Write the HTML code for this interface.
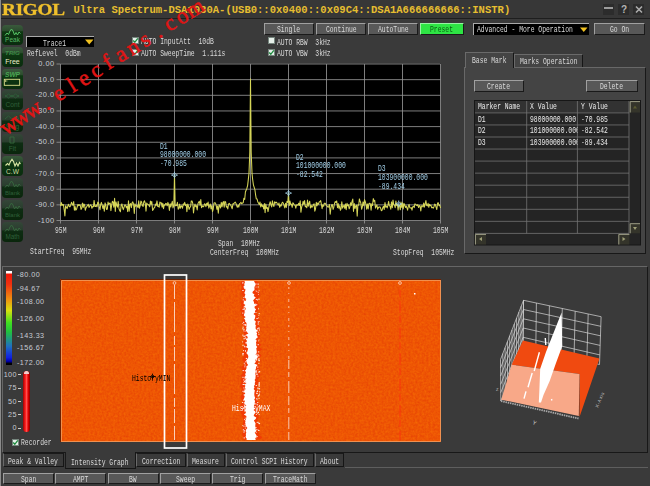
<!DOCTYPE html><html><head><meta charset="utf-8"><title>Ultra Spectrum</title><style>
*{margin:0;padding:0;box-sizing:border-box}
html,body{width:650px;height:486px;overflow:hidden;background:#3a3a3a}
body{position:relative;font-family:"Liberation Mono",monospace;font-size:6.4px;color:#dadada;line-height:8px}
.a{position:absolute;white-space:pre}
.t{position:absolute;white-space:pre;height:8px;line-height:8px;font-size:8.2px;transform:scaleX(0.78);transform-origin:0 50%}
.btn{position:absolute;background:#585858;border-top:1px solid #a0a0a0;border-left:1px solid #a0a0a0;border-right:1.5px solid #1a1a1a;border-bottom:1.5px solid #1a1a1a}
.sb{position:absolute;left:1.6px;width:21px;height:20px;border-radius:4px;overflow:hidden}
.ax{position:absolute;letter-spacing:0.45px;font-family:"Liberation Sans",sans-serif;font-size:7.4px;color:#c8ccd4;white-space:pre;line-height:8px;height:8px}
.cb{position:absolute;width:7px;height:7px;background:#e6efe9;border:1px solid #76867e}
.wm{width:30px;height:28px;line-height:28px;text-align:center;transform-origin:50% 16.4px;transform:rotate(-32deg);font-family:"Liberation Serif",serif;font-size:22.6px;color:#e01414;-webkit-text-stroke:0.5px #e01414}
.tab{position:absolute;background:#444444;border:1px solid #161616;border-top-color:#6a6a6a;border-left-color:#6a6a6a}
</style></head><body>
<div class="a" style="left:0;top:0;width:650px;height:19px;background:#373737;border-bottom:1.5px solid #1e1e1e"></div>
<div class="a" style="left:0;top:0;width:1.3px;height:486px;background:#8c8c8c"></div>
<div class="a" style="left:2.3px;top:0px;height:18px;line-height:19.5px;font-family:'Liberation Serif',serif;font-weight:bold;font-size:16px;color:#f0c02c;-webkit-text-stroke:0.35px #f0c02c;letter-spacing:-0.2px;transform-origin:0 0;transform:scaleX(1.2)">RIGOL</div>
<div class="a" style="left:73.5px;top:3.5px;height:12px;line-height:12px;font-family:'Liberation Mono',monospace;font-weight:bold;font-size:10.55px;color:#e6be30">Ultra Spectrum-DSA1030A-(USB0::0x0400::0x09C4::DSA1A666666666::INSTR)</div>
<div class="a" style="left:603px;top:4px;width:11px;height:11px;background:#2c2c2c"></div>
<div class="a" style="left:618px;top:4px;width:11px;height:11px;background:#2c2c2c"></div>
<div class="a" style="left:633px;top:4px;width:11px;height:11px;background:#2c2c2c"></div>
<div class="a" style="left:604px;top:7px;width:9px;height:2.4px;background:#9c9c9c"></div>
<div class="a" style="left:618px;top:4px;width:12px;height:11px;line-height:11px;text-align:center;font-family:'Liberation Sans',sans-serif;font-weight:bold;font-size:10px;color:#b4b4b4">?</div>
<svg class="a" style="left:633px;top:4px" width="12" height="11"><path d="M3 2.5 L9 8.5 M9 2.5 L3 8.5" stroke="#acacac" stroke-width="1.6"/></svg>
<div class="btn" style="left:264px;top:23px;width:50px;height:12px;"></div>
<div class="t" style="left:277.48px;top:26.30px;">Single</div>
<div class="btn" style="left:316px;top:23px;width:50px;height:12px;"></div>
<div class="t" style="left:325.64px;top:26.30px;">Continue</div>
<div class="btn" style="left:368px;top:23px;width:50px;height:12px;"></div>
<div class="t" style="left:377.64px;top:26.30px;">AutoTune</div>
<div class="btn" style="left:420px;top:23px;width:44px;height:12px;background:#2ee444;border-top-color:#9af0a4;border-left-color:#9af0a4"></div>
<div class="t" style="left:430.48px;top:26.30px;color:#0a5a14;">Preset</div>
<div class="a" style="left:473px;top:23px;width:116px;height:12px;background:#000;border-top:1px solid #aaa;border-left:1px solid #aaa"></div>
<div class="t" style="left:477px;top:26.10px;">Advanced - More Operation</div>
<svg class="a" style="left:579.5px;top:26.5px" width="8" height="6"><path d="M0 0.5 L7.5 0.5 L3.75 5 Z" fill="#f0c020"/></svg>
<div class="btn" style="left:594px;top:23px;width:51px;height:12px;"></div>
<div class="t" style="left:609.9px;top:26.30px;">Go On</div>
<div class="sb" style="top:24.8px;background:linear-gradient(#3a5a3c 0%,#2c4c2e 28%,#0e3812 34%,#0a2c0e 100%)"><svg width="21" height="20" viewBox="0 0 21 20" style="position:absolute;left:0;top:0"><path d="M1.5 8 L3.5 5.5 L5 7 L6.5 3.5 L8 1.5 L9.5 3.5 L11 7.5 L12.5 5 L14 7.5 L15.5 4.5 L17 6" transform="translate(1.5,2.5)" fill="none" stroke="#58c468" stroke-width="1"/><text x="10.5" y="17" text-anchor="middle" font-family="Liberation Sans,sans-serif" font-size="6.5" fill="#58b866" >Peak</text></svg></div>
<div class="sb" style="top:46.7px;background:linear-gradient(#3a5a3c 0%,#2c4c2e 28%,#0e3812 34%,#0a2c0e 100%)"><svg width="21" height="20" viewBox="0 0 21 20" style="position:absolute;left:0;top:0"><text x="10.5" y="8" text-anchor="middle" font-family="Liberation Sans,sans-serif" font-size="6.2" fill="#3f8a48" font-weight="bold" font-style="italic">TRIG</text><text x="10.5" y="17" text-anchor="middle" font-family="Liberation Sans,sans-serif" font-size="7" fill="#ecebc8" >Free</text></svg></div>
<div class="sb" style="top:68.5px;background:linear-gradient(#3a5a3c 0%,#2c4c2e 28%,#0e3812 34%,#0a2c0e 100%)"><svg width="21" height="20" viewBox="0 0 21 20" style="position:absolute;left:0;top:0"><text x="10.5" y="8" text-anchor="middle" font-family="Liberation Sans,sans-serif" font-size="6.6" fill="#49a652" font-weight="bold" font-style="italic">SWP</text><rect x="2.3" y="10.3" width="15.4" height="6" fill="none" stroke="#e0e08c" stroke-width="0.9"/><path d="M3 12 l2.4 0 M3 12 l1 -1 M3 12 l1 1" stroke="#e0e08c" stroke-width="0.6" fill="none"/></svg></div>
<div class="sb" style="top:90.4px;background:linear-gradient(#344638 0%,#2a3e2e 38%,#0e2c12 46%,#0a260c 100%)"><svg width="21" height="20" viewBox="0 0 21 20" style="position:absolute;left:0;top:0"><path d="M3 7 l3.5 -3 l3.5 3 l3.5 -3 l3.5 3 M3 5 l3.5 3 l3.5 -3 l3.5 3 l3.5 -3" fill="none" stroke="#30603a" stroke-width="0.9"/><text x="10.5" y="17" text-anchor="middle" font-family="Liberation Sans,sans-serif" font-size="6.6" fill="#30603a" >Cont</text></svg></div>
<div class="sb" style="top:112.3px;background:linear-gradient(#344638 0%,#2a3e2e 38%,#0e2c12 46%,#0a260c 100%)"><svg width="21" height="20" viewBox="0 0 21 20" style="position:absolute;left:0;top:0"><path d="M3 7 l3.5 -3 l3.5 3 l3.5 -3 l3.5 3" fill="none" stroke="#30603a" stroke-width="0.9"/><text x="10.5" y="17" text-anchor="middle" font-family="Liberation Sans,sans-serif" font-size="6.6" fill="#30603a" >Sing</text></svg></div>
<div class="sb" style="top:134.2px;background:linear-gradient(#344638 0%,#2a3e2e 38%,#0e2c12 46%,#0a260c 100%)"><svg width="21" height="20" viewBox="0 0 21 20" style="position:absolute;left:0;top:0"><path d="M8 3 h4 v6 h-4 z" fill="none" stroke="#386a40" stroke-width="0.9"/><text x="10.5" y="17" text-anchor="middle" font-family="Liberation Sans,sans-serif" font-size="6.6" fill="#30603a" >Fit</text></svg></div>
<div class="sb" style="top:156.0px;background:linear-gradient(#3a5a3c 0%,#2c4c2e 28%,#0e3812 34%,#0a2c0e 100%)"><svg width="21" height="20" viewBox="0 0 21 20" style="position:absolute;left:0;top:0"><path d="M2 7 L4 5 L5.5 6.5 L7 3 L8.5 0.8 L10 3 L11.5 7.5 L13 4.5 L14.5 7.5 L16 4 L17 5.5" transform="translate(1.5,2.5)" fill="none" stroke="#d8e4a4" stroke-width="1.1"/><text x="10.5" y="17.5" text-anchor="middle" font-family="Liberation Sans,sans-serif" font-size="6.6" fill="#cfdca0" >C.W</text></svg></div>
<div class="sb" style="top:177.9px;background:linear-gradient(#344638 0%,#2a3e2e 38%,#0e2c12 46%,#0a260c 100%)"><svg width="21" height="20" viewBox="0 0 21 20" style="position:absolute;left:0;top:0"><path d="M1.5 8 L3.5 5.5 L5 7 L6.5 3.5 L8 1.5 L9.5 3.5 L11 7.5 L12.5 5 L14 7.5 L15.5 4.5 L17 6" transform="translate(1.5,1.5)" fill="none" stroke="#386a40" stroke-width="0.9"/><text x="10.5" y="17" text-anchor="middle" font-family="Liberation Sans,sans-serif" font-size="6" fill="#30603a" >Blank</text></svg></div>
<div class="sb" style="top:199.8px;background:linear-gradient(#344638 0%,#2a3e2e 38%,#0e2c12 46%,#0a260c 100%)"><svg width="21" height="20" viewBox="0 0 21 20" style="position:absolute;left:0;top:0"><path d="M1.5 8 L3.5 5.5 L5 7 L6.5 3.5 L8 1.5 L9.5 3.5 L11 7.5 L12.5 5 L14 7.5 L15.5 4.5 L17 6" transform="translate(1.5,1.5)" fill="none" stroke="#386a40" stroke-width="0.9"/><text x="10.5" y="17" text-anchor="middle" font-family="Liberation Sans,sans-serif" font-size="6" fill="#30603a" >Blank</text></svg></div>
<div class="sb" style="top:221.6px;background:linear-gradient(#344638 0%,#2a3e2e 38%,#0e2c12 46%,#0a260c 100%)"><svg width="21" height="20" viewBox="0 0 21 20" style="position:absolute;left:0;top:0"><path d="M1.5 8 L3.5 5.5 L5 7 L6.5 3.5 L8 1.5 L9.5 3.5 L11 7.5 L12.5 5 L14 7.5 L15.5 4.5 L17 6" transform="translate(1.5,1.5)" fill="none" stroke="#386a40" stroke-width="0.9"/><text x="10.5" y="17" text-anchor="middle" font-family="Liberation Sans,sans-serif" font-size="6.4" fill="#30603a" >Math</text></svg></div>
<div class="a" style="left:26px;top:36px;width:67.5px;height:10.8px;background:#000;border-top:1px solid #aaa;border-left:1px solid #aaa"></div>
<div class="t" style="left:43.48px;top:39.70px;">Trace1</div>
<svg class="a" style="left:84.6px;top:39.3px" width="9" height="6"><path d="M0 0.5 L8.5 0.5 L4.25 5.5 Z" fill="#f0c020"/></svg>
<div class="t" style="left:26.5px;top:49.70px;">RefLevel  0dBm</div>
<div class="cb" style="left:132px;top:37px"></div>
<svg class="a" style="left:132px;top:37px" width="7" height="7"><path d="M1.2 3.5 L2.8 5.3 L5.8 1.4" fill="none" stroke="#1c8a3c" stroke-width="1.3"/></svg>
<div class="cb" style="left:132px;top:48.5px"></div>
<svg class="a" style="left:132px;top:48.5px" width="7" height="7"><path d="M1.2 3.5 L2.8 5.3 L5.8 1.4" fill="none" stroke="#1c8a3c" stroke-width="1.3"/></svg>
<div class="cb" style="left:268px;top:37px"></div>
<div class="cb" style="left:268px;top:48.5px"></div>
<svg class="a" style="left:268px;top:48.5px" width="7" height="7"><path d="M1.2 3.5 L2.8 5.3 L5.8 1.4" fill="none" stroke="#1c8a3c" stroke-width="1.3"/></svg>
<div class="t" style="left:141px;top:38.20px;">AUTO InputAtt  10dB</div>
<div class="t" style="left:141px;top:49.80px;">AUTO SweepTime  1.111s</div>
<div class="t" style="left:277px;top:38.50px;">AUTO RBW  3kHz</div>
<div class="t" style="left:277px;top:50.00px;">AUTO VBW  3kHz</div>
<svg class="a" style="left:0;top:0" width="650" height="260" viewBox="0 0 650 260"><rect x="60" y="63.5" width="381" height="157.5" fill="#000"/><path d="M60.50 64.00 V223.50 M56.50 64.00 H440.50 M98.50 64.00 V223.50 M56.50 79.65 H440.50 M136.50 64.00 V223.50 M56.50 95.30 H440.50 M174.50 64.00 V223.50 M56.50 110.95 H440.50 M212.50 64.00 V223.50 M56.50 126.60 H440.50 M250.50 64.00 V223.50 M56.50 142.25 H440.50 M288.50 64.00 V223.50 M56.50 157.90 H440.50 M326.50 64.00 V223.50 M56.50 173.55 H440.50 M364.50 64.00 V223.50 M56.50 189.20 H440.50 M402.50 64.00 V223.50 M56.50 204.85 H440.50 M440.50 64.00 V223.50 M56.50 220.50 H440.50" stroke="#949494" stroke-width="0.85" fill="none"/><polyline points="60.5,206.0 61.2,202.4 62.0,205.6 62.7,204.3 63.4,204.7 64.2,209.8 64.9,216.0 65.6,205.7 66.3,207.1 67.1,208.6 67.8,206.2 68.5,204.2 69.3,206.7 70.0,206.8 70.7,205.2 71.5,202.3 72.2,204.0 72.9,205.3 73.7,201.5 74.4,210.2 75.1,206.5 75.8,210.2 76.6,209.2 77.3,206.5 78.0,204.4 78.8,205.6 79.5,204.7 80.2,205.2 81.0,209.5 81.7,208.5 82.4,203.1 83.2,207.5 83.9,203.9 84.6,205.1 85.3,210.3 86.1,207.7 86.8,206.5 87.5,205.7 88.3,204.3 89.0,207.4 89.7,206.0 90.5,204.9 91.2,205.3 91.9,208.3 92.7,206.5 93.4,206.8 94.1,200.4 94.8,206.4 95.6,206.5 96.3,205.0 97.0,206.8 97.8,202.1 98.5,202.6 99.2,206.4 100.0,209.8 100.7,204.5 101.4,202.4 102.2,205.4 102.9,208.4 103.6,205.6 104.3,211.2 105.1,202.9 105.8,205.1 106.5,209.4 107.3,209.2 108.0,202.0 108.7,204.4 109.5,203.3 110.2,203.1 110.9,210.6 111.7,204.7 112.4,201.3 113.1,201.9 113.8,207.3 114.6,198.3 115.3,211.4 116.0,201.9 116.8,205.3 117.5,207.1 118.2,201.4 119.0,208.7 119.7,210.5 120.4,211.8 121.2,205.2 121.9,203.9 122.6,207.5 123.3,209.7 124.1,207.2 124.8,204.9 125.5,205.0 126.3,207.7 127.0,206.3 127.7,211.6 128.5,200.8 129.2,211.3 129.9,204.4 130.7,203.5 131.4,207.6 132.1,202.9 132.8,201.9 133.6,204.1 134.3,213.4 135.0,203.8 135.8,206.3 136.5,205.4 137.2,205.8 138.0,207.6 138.7,200.7 139.4,208.3 140.2,205.5 140.9,201.1 141.6,201.8 142.3,205.7 143.1,206.4 143.8,201.8 144.5,200.8 145.3,203.4 146.0,211.1 146.7,203.1 147.5,204.1 148.2,204.6 148.9,205.2 149.7,206.8 150.4,201.0 151.1,204.2 151.8,201.5 152.6,210.4 153.3,209.4 154.0,208.1 154.8,207.1 155.5,204.0 156.2,205.4 157.0,200.9 157.7,206.4 158.4,206.1 159.2,207.3 159.9,202.0 160.6,203.1 161.3,202.7 162.1,207.1 162.8,203.2 163.5,208.7 164.3,204.9 165.0,205.3 165.7,203.4 166.5,203.8 167.2,205.8 167.9,202.4 168.7,204.8 169.4,210.4 170.1,203.7 170.8,207.0 171.6,203.9 172.3,201.3 173.0,207.9 173.8,205.5 174.5,175.1 175.2,205.9 176.0,205.3 176.7,205.6 177.4,202.3 178.2,209.3 178.9,208.2 179.6,204.1 180.3,208.3 181.1,205.8 181.8,206.3 182.5,208.2 183.3,203.9 184.0,204.9 184.7,202.3 185.5,205.5 186.2,204.5 186.9,211.8 187.7,204.0 188.4,205.9 189.1,209.4 189.8,207.5 190.6,206.6 191.3,200.9 192.0,200.9 192.8,203.5 193.5,212.9 194.2,207.1 195.0,204.1 195.7,206.7 196.4,205.6 197.2,210.0 197.9,203.9 198.6,202.2 199.3,201.2 200.1,205.3 200.8,199.5 201.5,207.7 202.3,205.8 203.0,206.6 203.7,206.6 204.5,203.8 205.2,204.2 205.9,206.7 206.7,203.3 207.4,205.2 208.1,202.0 208.8,208.1 209.6,205.8 210.3,204.0 211.0,209.0 211.8,205.6 212.5,211.5 213.2,209.3 214.0,202.9 214.7,202.7 215.4,202.9 216.2,205.3 216.9,209.3 217.6,206.0 218.3,213.2 219.1,204.7 219.8,205.8 220.5,208.0 221.3,202.4 222.0,206.8 222.7,203.1 223.5,201.6 224.2,207.2 224.9,201.3 225.7,202.2 226.4,207.1 227.1,206.5 227.8,208.9 228.6,204.0 229.3,203.4 230.0,204.5 230.8,205.2 231.5,207.0 232.2,208.7 233.0,203.7 233.7,203.9 234.4,202.8 235.2,202.1 235.9,203.2 236.6,205.4 237.3,207.2 238.1,205.2 238.8,207.1 239.5,203.6 240.3,203.2 241.0,202.4 241.7,203.8 242.5,202.9 243.2,202.8 243.9,198.2 244.7,199.4 245.4,192.0 246.1,190.3 246.8,188.7 247.6,185.6 248.3,179.6 249.0,173.3 249.8,152.0 250.5,78.9 251.2,152.3 252.0,173.0 252.7,179.7 253.4,184.8 254.2,187.4 254.9,189.7 255.6,194.8 256.3,198.8 257.1,199.1 257.8,201.9 258.5,203.0 259.3,204.6 260.0,202.0 260.7,207.0 261.5,203.8 262.2,206.4 262.9,205.5 263.7,208.9 264.4,203.5 265.1,212.8 265.8,204.1 266.6,208.4 267.3,207.5 268.0,211.6 268.8,207.4 269.5,204.2 270.2,201.7 271.0,204.9 271.7,206.9 272.4,200.8 273.2,204.8 273.9,206.5 274.6,201.8 275.3,203.1 276.1,202.1 276.8,202.7 277.5,204.0 278.3,205.0 279.0,203.0 279.7,207.3 280.5,205.0 281.2,205.9 281.9,203.0 282.7,202.2 283.4,203.4 284.1,205.7 284.8,207.9 285.6,203.3 286.3,207.4 287.0,201.4 287.8,202.4 288.5,193.1 289.2,205.6 290.0,201.0 290.7,204.4 291.4,204.1 292.2,207.3 292.9,202.7 293.6,203.6 294.3,205.1 295.1,205.2 295.8,208.2 296.5,205.1 297.3,204.8 298.0,205.4 298.7,203.2 299.5,205.4 300.2,200.8 300.9,212.3 301.7,206.9 302.4,205.0 303.1,201.3 303.8,204.3 304.6,200.6 305.3,206.7 306.0,206.2 306.8,207.7 307.5,200.0 308.2,206.3 309.0,203.2 309.7,201.2 310.4,208.0 311.2,205.5 311.9,207.3 312.6,206.5 313.3,204.7 314.1,203.8 314.8,211.2 315.5,209.0 316.3,202.3 317.0,205.8 317.7,203.1 318.5,204.3 319.2,201.8 319.9,201.8 320.7,200.6 321.4,204.4 322.1,208.7 322.8,204.9 323.6,206.3 324.3,203.2 325.0,203.2 325.8,204.2 326.5,205.7 327.2,205.9 328.0,207.3 328.7,206.8 329.4,204.5 330.2,214.3 330.9,208.3 331.6,204.8 332.3,204.6 333.1,209.4 333.8,207.4 334.5,203.5 335.3,201.5 336.0,202.5 336.7,200.9 337.5,207.7 338.2,203.6 338.9,208.3 339.7,205.7 340.4,210.3 341.1,208.7 341.8,201.7 342.6,208.1 343.3,206.4 344.0,205.2 344.8,208.4 345.5,203.9 346.2,209.8 347.0,203.2 347.7,205.8 348.4,204.9 349.2,208.8 349.9,206.9 350.6,202.7 351.3,205.4 352.1,201.2 352.8,199.1 353.5,211.5 354.3,203.5 355.0,208.5 355.7,206.2 356.5,205.2 357.2,216.1 357.9,205.1 358.7,205.2 359.4,198.9 360.1,201.3 360.8,202.9 361.6,209.3 362.3,207.1 363.0,201.9 363.8,205.7 364.5,199.6 365.2,201.5 366.0,204.5 366.7,209.2 367.4,203.9 368.2,209.0 368.9,203.6 369.6,203.2 370.3,203.6 371.1,210.2 371.8,203.7 372.5,205.5 373.3,198.6 374.0,201.3 374.7,200.2 375.5,208.1 376.2,206.3 376.9,204.9 377.7,209.3 378.4,207.5 379.1,207.0 379.8,206.9 380.6,208.1 381.3,210.7 382.0,210.3 382.8,207.6 383.5,206.2 384.2,209.4 385.0,202.5 385.7,207.2 386.4,206.0 387.2,207.9 387.9,205.4 388.6,201.4 389.3,205.5 390.1,206.4 390.8,209.2 391.5,201.9 392.3,207.8 393.0,200.0 393.7,204.6 394.5,205.1 395.2,207.7 395.9,201.0 396.7,205.6 397.4,204.2 398.1,210.1 398.8,204.7 399.6,205.9 400.3,209.8 401.0,202.1 401.8,207.5 402.5,202.8 403.2,208.9 404.0,203.4 404.7,205.0 405.4,207.4 406.2,206.0 406.9,207.9 407.6,210.2 408.3,206.5 409.1,204.4 409.8,207.7 410.5,208.0 411.3,207.6 412.0,210.2 412.7,206.8 413.5,206.2 414.2,207.6 414.9,203.9 415.7,204.2 416.4,205.2 417.1,205.6 417.8,204.6 418.6,207.5 419.3,205.6 420.0,205.8 420.8,210.9 421.5,205.7 422.2,205.7 423.0,207.0 423.7,203.1 424.4,207.1 425.2,203.7 425.9,200.5 426.6,205.4 427.3,205.9 428.1,203.3 428.8,207.3 429.5,204.3 430.3,205.6 431.0,205.3 431.7,207.8 432.5,207.3 433.2,208.3 433.9,207.0 434.7,204.1 435.4,204.7 436.1,207.3 436.8,209.5 437.6,203.1 438.3,202.8 439.0,205.7 439.8,205.0 440.5,208.0" fill="none" stroke="#d6d658" stroke-width="1.05" stroke-linejoin="round"/><path d="M171.0 175.1 h7 M174.5 171.6 v7 M172.2 175.1 l2.3 -2.3 l2.3 2.3 l-2.3 2.3 z" stroke="#a8d4ec" stroke-width="0.7" fill="none"/><path d="M285.0 193.1 h7 M288.5 189.6 v7 M286.2 193.1 l2.3 -2.3 l2.3 2.3 l-2.3 2.3 z" stroke="#a8d4ec" stroke-width="0.7" fill="none"/><path d="M395.2 203.9 h7 M398.7 200.4 v7 M396.4 203.9 l2.3 -2.3 l2.3 2.3 l-2.3 2.3 z" stroke="#a8d4ec" stroke-width="0.7" fill="none"/></svg>
<div class="ax" style="left:24px;width:30.5px;text-align:right;top:60.1px">0.00</div>
<div class="ax" style="left:24px;width:30.5px;text-align:right;top:75.8px">-10.0</div>
<div class="ax" style="left:24px;width:30.5px;text-align:right;top:91.4px">-20.0</div>
<div class="ax" style="left:24px;width:30.5px;text-align:right;top:107.0px">-30.0</div>
<div class="ax" style="left:24px;width:30.5px;text-align:right;top:122.7px">-40.0</div>
<div class="ax" style="left:24px;width:30.5px;text-align:right;top:138.3px">-50.0</div>
<div class="ax" style="left:24px;width:30.5px;text-align:right;top:154.0px">-60.0</div>
<div class="ax" style="left:24px;width:30.5px;text-align:right;top:169.7px">-70.0</div>
<div class="ax" style="left:24px;width:30.5px;text-align:right;top:185.3px">-80.0</div>
<div class="ax" style="left:24px;width:30.5px;text-align:right;top:200.9px">-90.0</div>
<div class="ax" style="left:24px;width:30.5px;text-align:right;top:216.6px">-100</div>
<div class="t" style="left:55.24px;top:227.20px;">95M</div>
<div class="t" style="left:93.24px;top:227.20px;">96M</div>
<div class="t" style="left:131.24px;top:227.20px;">97M</div>
<div class="t" style="left:169.24px;top:227.20px;">98M</div>
<div class="t" style="left:207.24px;top:227.20px;">99M</div>
<div class="t" style="left:243.32px;top:227.20px;">100M</div>
<div class="t" style="left:281.32px;top:227.20px;">101M</div>
<div class="t" style="left:319.32px;top:227.20px;">102M</div>
<div class="t" style="left:357.32px;top:227.20px;">103M</div>
<div class="t" style="left:395.32px;top:227.20px;">104M</div>
<div class="t" style="left:433.32px;top:227.20px;">105M</div>
<div class="t" style="left:160px;top:142.50px;color:#a2cfe8;">D1</div>
<div class="t" style="left:160px;top:151.00px;color:#a2cfe8;">98000000.000</div>
<div class="t" style="left:160px;top:159.50px;color:#a2cfe8;">-70.985</div>
<div class="t" style="left:296.2px;top:153.50px;color:#a2cfe8;">D2</div>
<div class="t" style="left:296.2px;top:162.30px;color:#a2cfe8;">101000000.000</div>
<div class="t" style="left:296.2px;top:171.00px;color:#a2cfe8;">-82.542</div>
<div class="t" style="left:378px;top:164.90px;color:#a2cfe8;">D3</div>
<div class="t" style="left:378px;top:173.50px;color:#a2cfe8;">103900000.000</div>
<div class="t" style="left:378px;top:182.50px;color:#a2cfe8;">-89.434</div>
<div class="t" style="left:30px;top:248.30px;">StartFreq  95MHz</div>
<div class="t" style="left:218px;top:239.50px;">Span  10MHz</div>
<div class="t" style="left:210px;top:248.50px;">CenterFreq  100MHz</div>
<div class="t" style="left:392.5px;top:248.50px;">StopFreq  105MHz</div>
<div class="a" style="left:464px;top:67px;width:182px;height:187px;background:#444444;border:1px solid #181818;border-top-color:#686868;border-left-color:#686868"></div>
<div class="tab" style="left:465px;top:52px;width:49px;height:16px;border-bottom:none"></div>
<div class="tab" style="left:514px;top:54px;width:69px;height:13px;border-bottom:none"></div>
<div class="t" style="left:472.22px;top:56.80px;">Base Mark</div>
<div class="t" style="left:519.7px;top:57.50px;">Marks Operation</div>
<div class="btn" style="left:474px;top:80px;width:50px;height:11.5px;"></div>
<div class="t" style="left:487.48px;top:82.70px;">Create</div>
<div class="btn" style="left:586px;top:80px;width:52px;height:11.5px;"></div>
<div class="t" style="left:600.48px;top:82.70px;">Delete</div>
<svg class="a" style="left:0;top:0" width="650" height="260" viewBox="0 0 650 260"><rect x="474.5" y="100.5" width="166" height="144.5" fill="#242424" stroke="#161616"/><rect x="475" y="101" width="154" height="11.5" fill="#323232"/><path d="M475 112.90 H629 M475 124.95 H629 M475 137.00 H629 M475 149.05 H629 M475 161.10 H629 M475 173.15 H629 M475 185.20 H629 M475 197.25 H629 M475 209.30 H629 M475 221.35 H629 M475 233.40 H629 M526.7 101 V233.4 M577.4 101 V233.4 M629.0 101 V233.4" stroke="#747474" stroke-width="0.8" fill="none"/><rect x="629.8" y="101.2" width="10.2" height="11.3" fill="#34342a"/><path d="M630.2 112.5 V101.6 H640" stroke="#a8a890" stroke-width="0.9" fill="none"/><path d="M633 108.5 l2 -3 l2 3z" fill="#5a5a30"/><rect x="629.8" y="223.3" width="10.2" height="10" fill="#34342a"/><path d="M630.2 233.3 V223.7 H640" stroke="#a8a890" stroke-width="0.9" fill="none"/><path d="M633 227 l2 3 l2 -3z" fill="#a0a078"/><rect x="475" y="234" width="11" height="10.5" fill="#34342a"/><path d="M475.4 244.5 V234.4 H486" stroke="#a8a890" stroke-width="0.9" fill="none"/><path d="M482 237 l-3 2 l3 2z" fill="#a0a078"/><rect x="618.4" y="234" width="11" height="10.5" fill="#34342a"/><path d="M618.8 244.5 V234.4 H629.4" stroke="#a8a890" stroke-width="0.9" fill="none"/><path d="M622.5 237 l3 2 l-3 2z" fill="#a0a078"/></svg>
<div class="t" style="left:477.5px;top:103.10px;color:#ececec;">Marker Name</div>
<div class="t" style="left:529.5px;top:103.10px;color:#ececec;">X Value</div>
<div class="t" style="left:580.8px;top:103.10px;color:#ececec;">Y Value</div>
<div class="t" style="left:477.5px;top:115.50px;color:#ececec;">D1</div>
<div class="t" style="left:529.5px;top:115.50px;color:#ececec;width:60.9px;overflow:hidden;">98000000.000</div>
<div class="t" style="left:580.8px;top:115.50px;color:#ececec;">-70.985</div>
<div class="t" style="left:477.5px;top:127.40px;color:#ececec;">D2</div>
<div class="t" style="left:529.5px;top:127.40px;color:#ececec;width:60.9px;overflow:hidden;">101000000.000</div>
<div class="t" style="left:580.8px;top:127.40px;color:#ececec;">-82.542</div>
<div class="t" style="left:477.5px;top:139.30px;color:#ececec;">D3</div>
<div class="t" style="left:529.5px;top:139.30px;color:#ececec;width:60.9px;overflow:hidden;">103900000.000</div>
<div class="t" style="left:580.8px;top:139.30px;color:#ececec;">-89.434</div>
<div class="a" style="left:2px;top:266px;width:646px;height:187px;border:1px solid #181818;border-top-color:#666;border-left-color:#666"></div>
<div class="a" style="left:6px;top:271px;width:6px;height:94px;background:linear-gradient(#fff 0,#fff 2px,#f01808 3px,#f03010 14%,#f09010 30%,#d8e010 42%,#40e020 55%,#20c040 65%,#2070c0 80%,#1020e0 92%,#0000b0 96%,#000 98.5%,#000 100%)"></div>
<div class="ax" style="left:17px;top:270.9px;font-size:7.2px">-80.00</div>
<div class="ax" style="left:17px;top:284.9px;font-size:7.2px">-94.67</div>
<div class="ax" style="left:17px;top:297.9px;font-size:7.2px">-108.00</div>
<div class="ax" style="left:17px;top:315.1px;font-size:7.2px">-126.00</div>
<div class="ax" style="left:17px;top:331.6px;font-size:7.2px">-143.33</div>
<div class="ax" style="left:17px;top:344.1px;font-size:7.2px">-156.67</div>
<div class="ax" style="left:17px;top:358.7px;font-size:7.2px">-172.00</div>
<div class="a" style="left:23px;top:371px;width:7px;height:61px;border-radius:3.5px;background:linear-gradient(90deg,#a00000,#ff2020 35%,#ff5050 50%,#e00000 75%,#800000)"></div>
<div class="a" style="left:24px;top:371px;width:5px;height:3px;border-radius:2.5px 2.5px 0 0;background:#f0d0d0"></div>
<div class="ax" style="left:2px;width:15px;text-align:right;top:370.7px;font-size:7.2px">100</div>
<div class="a" style="left:18px;top:374.1px;width:3px;height:1px;background:#ccc"></div>
<div class="ax" style="left:2px;width:15px;text-align:right;top:384.1px;font-size:7.2px">75</div>
<div class="a" style="left:18px;top:387.5px;width:3px;height:1px;background:#ccc"></div>
<div class="ax" style="left:2px;width:15px;text-align:right;top:397.5px;font-size:7.2px">50</div>
<div class="a" style="left:18px;top:400.9px;width:3px;height:1px;background:#ccc"></div>
<div class="ax" style="left:2px;width:15px;text-align:right;top:410.9px;font-size:7.2px">25</div>
<div class="a" style="left:18px;top:414.3px;width:3px;height:1px;background:#ccc"></div>
<div class="ax" style="left:2px;width:15px;text-align:right;top:424.3px;font-size:7.2px">0</div>
<div class="a" style="left:18px;top:427.7px;width:3px;height:1px;background:#ccc"></div>
<div class="cb" style="left:12px;top:438.5px"></div>
<svg class="a" style="left:12px;top:438.5px" width="7" height="7"><path d="M1.2 3.5 L2.8 5.3 L5.8 1.4" fill="none" stroke="#1c8a3c" stroke-width="1.3"/></svg>
<div class="t" style="left:21px;top:439.30px;">Recorder</div>
<svg class="a" style="left:0;top:262px" width="650" height="200" viewBox="0 262 650 200"><defs><filter id="nz" x="0" y="0" width="100%" height="100%" color-interpolation-filters="sRGB"><feTurbulence type="fractalNoise" baseFrequency="0.45" numOctaves="2" seed="3" result="n"/><feColorMatrix type="matrix" values="0.06 0 0 0 0.903  0.16 0 0 0 0.255  0 0 0 0 0.015  0 0 0 0 1"/></filter></defs><rect x="60" y="279" width="381" height="163" fill="#ee5606"/><rect x="61" y="280" width="379" height="161" filter="url(#nz)"/><path d="M60.5 442 V279.5 H441" stroke="#6a2000" stroke-width="1" fill="none"/><path d="M61.5 442 V280.5 H441" stroke="#f09050" stroke-width="1" fill="none"/><path d="M61.5 441.5 H440.5 V280.5" stroke="#f09050" stroke-width="1" fill="none"/><polygon points="241.8,281.0 240.3,283.2 241.4,285.4 241.7,287.6 240.9,289.8 241.5,292.0 241.4,294.2 243.2,296.4 242.5,298.6 241.6,300.8 240.8,303.0 241.0,305.2 242.2,307.4 239.9,309.6 241.5,311.8 240.9,314.0 242.7,316.2 244.9,318.4 242.3,320.6 242.7,322.8 242.3,325.0 244.3,327.2 244.6,329.4 243.0,331.6 244.1,333.8 243.8,336.0 244.7,338.2 244.4,340.4 242.6,342.6 244.5,344.8 242.8,347.0 243.1,349.2 244.4,351.4 241.5,353.6 244.5,355.8 242.9,358.0 242.6,360.2 243.9,362.4 244.0,364.6 241.5,366.8 241.9,369.0 242.6,371.2 243.0,373.4 240.4,375.6 242.7,377.8 240.2,380.0 241.6,382.2 240.4,384.4 239.7,386.6 242.0,388.8 241.0,391.0 243.1,393.2 241.1,395.4 240.5,397.6 241.5,399.8 243.1,402.0 240.4,404.2 242.4,406.4 240.8,408.6 240.6,410.8 240.9,413.0 241.9,415.2 242.5,417.4 243.4,419.6 243.1,421.8 242.9,424.0 242.6,426.2 242.4,428.4 243.5,430.6 242.2,432.8 242.3,435.0 242.9,437.2 243.7,439.4 260.2,439.4 262.3,437.2 259.0,435.0 258.4,432.8 259.1,430.6 260.0,428.4 259.7,426.2 258.8,424.0 257.5,421.8 257.5,419.6 258.9,417.4 258.4,415.2 256.7,413.0 258.9,410.8 256.0,408.6 258.0,406.4 259.4,404.2 258.1,402.0 257.8,399.8 257.2,397.6 256.7,395.4 258.6,393.2 258.5,391.0 256.3,388.8 257.9,386.6 257.3,384.4 259.4,382.2 257.7,380.0 259.3,377.8 260.5,375.6 259.7,373.4 257.8,371.2 259.9,369.0 259.5,366.8 257.6,364.6 258.3,362.4 257.6,360.2 258.9,358.0 261.5,355.8 259.1,353.6 259.2,351.4 262.3,349.2 259.0,347.0 261.4,344.8 258.4,342.6 259.0,340.4 258.7,338.2 260.7,336.0 258.1,333.8 258.5,331.6 259.0,329.4 260.2,327.2 258.5,325.0 259.1,322.8 260.3,320.6 258.6,318.4 258.5,316.2 256.2,314.0 257.2,311.8 258.2,309.6 257.7,307.4 259.7,305.2 257.9,303.0 257.7,300.8 258.0,298.6 259.5,296.4 259.7,294.2 259.3,292.0 257.9,289.8 257.4,287.6 257.5,285.4 259.1,283.2 256.1,281.0" fill="#f23606" opacity="0.85"/><polygon points="244.5,281.0 244.9,282.5 244.2,284.0 244.6,285.5 243.1,287.0 245.2,288.5 245.4,290.0 245.0,291.5 244.3,293.0 245.4,294.5 244.8,296.0 244.5,297.5 246.3,299.0 246.0,300.5 243.5,302.0 244.4,303.5 245.3,305.0 244.6,306.5 245.5,308.0 246.0,309.5 244.4,311.0 245.2,312.5 244.3,314.0 243.8,315.5 245.9,317.0 243.9,318.5 245.3,320.0 245.2,321.5 246.5,323.0 246.5,324.5 246.3,326.0 246.7,327.5 246.3,329.0 245.9,330.5 246.9,332.0 248.4,333.5 245.4,335.0 247.4,336.5 247.8,338.0 245.9,339.5 247.1,341.0 246.0,342.5 246.6,344.0 247.2,345.5 245.9,347.0 248.2,348.5 247.7,350.0 247.4,351.5 246.2,353.0 247.6,354.5 248.3,356.0 248.2,357.5 247.3,359.0 246.1,360.5 246.6,362.0 247.0,363.5 248.2,365.0 246.3,366.5 246.6,368.0 246.0,369.5 245.4,371.0 246.0,372.5 245.2,374.0 245.8,375.5 244.9,377.0 246.4,378.5 245.3,380.0 245.3,381.5 246.6,383.0 244.8,384.5 245.4,386.0 244.6,387.5 245.7,389.0 244.3,390.5 244.0,392.0 245.3,393.5 244.1,395.0 244.7,396.5 244.2,398.0 243.6,399.5 244.9,401.0 244.4,402.5 244.5,404.0 246.3,405.5 245.3,407.0 245.8,408.5 245.1,410.0 245.4,411.5 246.0,413.0 243.8,414.5 246.4,416.0 246.3,417.5 246.0,419.0 245.2,420.5 245.5,422.0 245.6,423.5 245.7,425.0 246.2,426.5 247.4,428.0 246.1,429.5 245.6,431.0 246.3,432.5 245.8,434.0 246.0,435.5 245.5,437.0 246.6,438.5 246.6,440.0 255.9,440.0 255.0,438.5 256.2,437.0 256.6,435.5 255.6,434.0 254.7,432.5 256.6,431.0 255.3,429.5 255.7,428.0 255.3,426.5 255.3,425.0 255.6,423.5 254.8,422.0 253.9,420.5 255.7,419.0 256.3,417.5 253.7,416.0 254.1,414.5 255.2,413.0 255.4,411.5 253.5,410.0 255.4,408.5 253.6,407.0 254.0,405.5 254.9,404.0 254.7,402.5 255.1,401.0 254.2,399.5 255.2,398.0 254.6,396.5 254.3,395.0 254.3,393.5 254.5,392.0 254.9,390.5 253.6,389.0 254.5,387.5 253.9,386.0 255.0,384.5 254.7,383.0 255.4,381.5 254.6,380.0 255.5,378.5 255.5,377.0 255.7,375.5 255.3,374.0 255.6,372.5 255.6,371.0 255.5,369.5 255.9,368.0 256.3,366.5 257.6,365.0 254.3,363.5 255.9,362.0 255.4,360.5 255.8,359.0 257.7,357.5 257.8,356.0 255.5,354.5 256.7,353.0 256.7,351.5 256.6,350.0 256.2,348.5 257.3,347.0 256.1,345.5 256.3,344.0 256.0,342.5 256.6,341.0 255.5,339.5 256.8,338.0 257.6,336.5 256.6,335.0 257.1,333.5 256.3,332.0 257.6,330.5 255.7,329.0 255.6,327.5 255.7,326.0 255.1,324.5 255.4,323.0 255.9,321.5 254.1,320.0 254.9,318.5 255.2,317.0 255.4,315.5 253.5,314.0 255.1,312.5 254.9,311.0 256.1,309.5 254.6,308.0 254.6,306.5 256.9,305.0 254.0,303.5 254.0,302.0 253.1,300.5 254.3,299.0 255.8,297.5 253.7,296.0 254.5,294.5 252.4,293.0 252.8,291.5 254.5,290.0 254.5,288.5 254.4,287.0 255.3,285.5 255.7,284.0 254.7,282.5 254.0,281.0" fill="#fff"/><path d="M243.9 346.1 h0.8 M258.1 317.9 h0.7 M257.9 412.5 h1.1 M244.5 377.2 h1.4 M256.7 404.8 h1.4 M258.4 395.1 h1.4 M242.3 290.5 h1.4 M257.8 321.4 h0.6 M245.8 299.2 h1.0 M245.2 361.8 h1.0 M257.6 344.7 h1.3 M246.0 421.7 h1.2 M257.6 324.0 h1.3 M245.1 287.7 h1.1 M244.9 350.5 h0.9 M245.9 384.3 h1.5 M255.4 427.5 h1.1 M255.6 429.2 h0.7 M257.4 328.4 h0.8 M258.5 398.3 h1.1 M255.9 372.1 h1.2 M257.6 354.8 h1.0 M244.8 331.1 h0.8 M255.1 368.3 h0.9 M244.8 418.2 h0.9 M244.9 324.6 h1.3 M243.7 307.1 h0.9 M258.4 385.9 h0.9 M242.1 402.5 h1.2 M256.4 429.6 h0.9 M258.4 388.7 h1.1 M256.2 398.7 h1.2 M244.4 381.9 h0.7 M244.1 346.8 h1.5 M258.5 372.4 h0.9 M244.6 380.2 h1.0 M256.3 354.3 h1.0 M257.7 369.7 h0.6 M256.6 399.8 h0.9 M244.4 366.8 h0.9 M256.4 318.6 h1.4 M255.9 414.4 h1.0 M246.0 425.9 h0.8 M258.8 423.6 h1.3 M257.2 367.1 h1.1 M257.0 390.3 h0.6 M258.9 388.8 h1.2 M244.5 365.0 h1.1 M242.6 384.5 h1.5 M258.2 358.9 h1.4 M245.4 374.8 h0.9 M257.2 436.6 h0.7 M258.4 423.3 h1.5 M257.6 422.3 h1.1 M244.1 411.0 h0.8 M244.7 310.8 h1.5 M243.3 382.6 h0.6 M242.4 282.4 h1.0 M243.4 297.6 h0.8 M258.6 360.7 h1.4 M243.8 363.3 h1.0 M244.0 301.2 h1.1 M245.4 286.6 h1.1 M258.3 412.1 h0.7 M255.7 284.0 h0.8 M245.0 325.5 h0.7 M244.7 424.8 h1.0 M245.2 342.9 h1.0 M244.3 402.7 h1.2 M245.5 321.4 h1.1 M242.5 309.4 h1.3 M258.9 330.0 h1.0 M243.4 432.1 h1.2 M256.3 374.4 h1.4 M245.8 358.5 h0.8 M242.2 341.9 h0.9 M244.8 370.7 h1.4 M242.3 335.1 h1.0 M244.6 426.3 h1.0 M255.2 336.4 h1.2 M245.1 335.9 h0.7 M243.9 313.0 h1.0 M245.5 407.6 h0.9 M257.6 396.1 h1.1 M257.1 329.0 h0.8 M242.3 353.5 h1.5 M257.5 376.2 h0.9 M245.6 320.9 h1.3 M243.9 389.1 h0.8 M255.2 403.9 h1.2 M244.5 304.9 h0.7 M244.8 310.0 h1.2 M258.3 299.2 h1.3 M255.5 312.5 h0.9 M256.2 411.1 h1.0 M242.4 425.6 h0.8 M258.7 339.9 h0.6 M256.1 393.2 h1.4 M245.4 337.6 h0.7 M243.2 426.2 h0.6 M244.4 288.3 h1.3 M243.9 306.7 h1.2 M243.8 430.8 h1.2 M257.8 322.2 h1.1 M242.8 429.8 h1.3 M242.6 327.2 h1.1 M243.4 392.0 h0.6 M258.1 332.3 h0.7 M259.1 391.8 h1.2 M244.7 316.9 h1.5 M257.9 351.9 h1.3 M257.1 413.1 h1.2 M244.1 314.5 h0.8 M255.8 432.5 h0.7 M243.9 405.4 h0.8 M256.5 291.4 h0.7 M245.6 382.6 h1.2 M243.3 387.9 h0.6 M242.4 391.3 h0.9 M243.7 329.3 h0.8 M243.9 381.4 h1.3 M243.7 308.7 h1.0 M245.6 403.1 h0.9 M245.9 339.0 h1.4 M243.3 330.0 h1.0 M256.9 299.9 h1.1 M245.9 327.7 h1.0 M255.4 436.8 h1.2 M255.5 436.9 h1.0 M243.0 350.6 h0.9 M243.5 338.8 h1.2 M257.7 429.8 h0.7 M243.0 400.1 h1.4 M242.3 328.8 h1.1 M245.7 423.5 h1.2 M256.6 331.0 h1.2 M244.6 338.3 h1.1 M256.1 340.3 h0.6 M258.7 371.6 h1.5 M258.0 360.1 h1.5 M245.5 377.2 h0.8 M255.5 303.9 h0.6 M245.2 351.4 h0.9 M255.7 287.1 h0.7 M258.7 290.7 h0.7 M242.5 283.4 h0.7 M258.3 328.7 h1.2 M255.4 371.7 h0.9 M242.2 354.8 h1.5 M243.2 379.9 h0.9 M258.9 386.0 h1.0 M258.6 384.3 h1.1 M245.2 382.1 h1.3 M243.5 391.2 h0.9 M256.5 373.8 h0.8 M255.6 351.7 h0.8 M245.2 422.6 h1.4 M244.0 384.6 h0.8 M256.0 359.3 h1.1 M242.7 299.9 h1.2 M242.6 408.5 h1.1 M243.6 394.9 h1.5 M258.4 363.4 h1.0 M243.8 309.1 h1.3 M244.5 303.6 h0.6 M244.3 288.6 h0.7 M243.6 303.4 h1.4 M255.8 370.9 h1.3 M242.8 335.9 h0.7 M258.0 340.9 h0.6 M244.7 377.4 h0.9 M242.4 377.3 h1.2 M243.3 322.2 h0.6 M255.6 438.2 h0.6 M255.8 299.4 h1.1 M258.4 327.8 h1.1 M258.9 321.5 h0.6 M244.2 336.1 h1.0 M245.8 287.0 h1.2 M258.5 383.9 h1.5 M256.7 391.5 h1.4 M244.7 378.5 h1.1 M243.7 331.2 h0.6 M258.0 308.8 h0.9 M256.4 356.0 h0.9 M246.0 358.4 h1.0 M243.6 437.9 h1.3 M256.2 304.7 h1.1 M242.1 323.4 h0.6 M242.6 370.6 h1.3 M244.6 382.0 h0.9 M243.4 407.7 h0.9 M257.1 402.6 h1.2 M256.4 337.4 h1.2 M257.1 388.1 h1.4 M255.7 409.9 h0.8 M256.7 422.4 h1.0 M243.8 404.0 h0.7 M258.0 395.7 h1.1 M255.4 430.1 h0.8 M244.9 428.1 h0.9 M258.0 355.9 h1.4 M258.7 414.5 h0.8 M243.1 322.7 h1.2 M245.2 319.4 h1.0 M258.6 313.7 h1.2 M242.2 313.1 h1.1 M258.0 294.5 h0.6 M243.5 324.8 h1.4 M258.6 315.5 h0.6 M255.8 358.8 h1.4 M243.6 407.8 h0.9 M256.1 360.1 h1.0 M257.4 284.1 h1.5 M255.7 290.9 h0.6 M244.7 315.3 h0.9 M243.5 336.4 h1.1 M258.4 334.3 h1.0 M257.7 287.0 h1.1 M256.5 393.6 h1.1 M255.1 325.3 h1.0 M255.7 385.5 h1.2 M242.4 345.3 h1.2 M243.9 301.3 h0.8 M258.1 430.5 h1.4 M244.0 419.6 h0.9 M259.0 394.1 h1.0 M258.7 382.5 h1.0 M245.7 315.5 h1.3 M257.8 292.3 h0.9" stroke="#fff" stroke-width="0.9"/><path d="M174.5 285 V440" stroke="#fff" stroke-width="0.8" stroke-dasharray="14 3 30 4 9 2" opacity="0.9"/><path d="M288.8 287 V360" stroke="#fff" stroke-width="0.8" stroke-dasharray="2 4 1 5 3 4" opacity="0.75"/><path d="M288.8 360 V440" stroke="#fff" stroke-width="0.8" stroke-dasharray="9 3 5 4 12 3" opacity="0.85"/><path d="M400 290 V440" stroke="#ff3010" stroke-width="0.9" stroke-dasharray="7 4 12 3" opacity="0.9"/><circle cx="174.5" cy="283" r="1.4" fill="none" stroke="#fff" stroke-width="0.6"/><circle cx="289" cy="283" r="1.4" fill="none" stroke="#fff" stroke-width="0.6"/><circle cx="400" cy="283" r="1.4" fill="none" stroke="#fff" stroke-width="0.6"/><rect x="414" y="293" width="1.5" height="1.5" fill="#fff"/><path d="M149.5 376.5 h6 M152.5 373.5 v6 M150.5 376.5 l2 -2 l2 2 l-2 2z" stroke="#000" stroke-width="0.7" fill="none"/><rect x="164.5" y="275" width="22" height="173" fill="none" stroke="#fff" stroke-width="1.7"/></svg>
<div class="t" style="left:132px;top:374.50px;color:#000;">HistoryMIN</div>
<div class="t" style="left:232px;top:405.20px;color:#fff;">HistoryMAX</div>
<svg class="a" style="left:0;top:262px" width="650" height="200" viewBox="0 262 650 200"><path d="M523.5 300.3 L523.0 346.5 M536.4 303.0 L535.8 349.5 M549.4 305.8 L548.5 352.5 M562.3 308.5 L561.2 355.5 M575.2 311.2 L574.0 358.5 M588.2 314.0 L586.8 361.5 M601.1 316.7 L599.5 364.5 M523.5 300.3 L601.1 316.7 M523.4 309.5 L600.8 326.3 M523.3 318.8 L600.5 335.8 M523.2 328.0 L600.1 345.4 M523.1 337.3 L599.8 354.9 M523.0 346.5 L599.5 364.5 M523.5 300.3 L523.0 346.5 M521.2 306.2 L520.8 351.9 M518.9 312.1 L518.6 357.4 M516.6 318.1 L516.3 362.9 M514.3 324.0 L514.1 368.3 M512.0 329.9 L511.9 373.8 M509.7 335.8 L509.7 379.2 M507.4 341.7 L507.5 384.6 M505.1 347.7 L505.2 390.1 M502.8 353.6 L503.0 395.6 M500.5 359.5 L500.8 401.0 M523.5 300.3 L500.5 359.5 M523.4 309.5 L500.6 367.8 M523.3 318.8 L500.6 376.1 M523.2 328.0 L500.7 384.4 M523.1 337.3 L500.7 392.7 M523.0 346.5 L500.8 401.0" stroke="#d8d8d8" stroke-width="0.7" fill="none"/><polygon points="523,340.5 599.5,358.5 579.5,417 579.5,374 511.6,364.7" fill="#f04a10"/><polygon points="511.6,364.7 579.5,374 578.8,416 501.3,399.7" fill="#f8a888"/><path d="M501 401 L578.5 418.5" stroke="#a8a8a8" stroke-width="1.8" stroke-dasharray="1.5 0.8"/><polygon points="561.6,312.5 562.3,346 556,363 549.7,381 543.5,395 541,402.5 538.8,402.5 539.3,392 540.2,368.8 546,352" fill="#fff"/><path d="M545.3 338 L545.8 345 M539.4 352.3 L534.2 371 M532.2 373 L528 387.3 M526 391.4 L524 398.6 M551.5 399 l0.4 1.5" stroke="#fff" stroke-width="1.4"/><text x="533" y="425" font-family="Liberation Sans,sans-serif" font-size="5.5" fill="#d8d8d8" transform="rotate(25 535 422)">Y</text><text x="598" y="408" font-family="Liberation Sans,sans-serif" font-size="4.6" fill="#c8c8c8" letter-spacing="0.6" transform="rotate(-67 598 408)">X-Axis</text><text x="496" y="391" font-family="Liberation Sans,sans-serif" font-size="4" fill="#c0c0c0">Z</text></svg>
<div class="tab" style="left:2.5px;top:453px;width:61px;height:14px;background:#3a3a3a;border-top-color:#1a1a1a;border-bottom-color:#161616;border-right-width:1.5px;border-bottom-width:1.5px"></div>
<div class="t" style="left:8.04px;top:457.50px;">Peak &amp; Valley</div>
<div class="tab" style="left:64.5px;top:452px;width:71px;height:17px;background:#3a3a3a;border-top:none;border-left-color:#1a1a1a;border-right-width:1.5px;border-bottom-width:1.5px"></div>
<div class="t" style="left:71.2px;top:458.50px;">Intensity Graph</div>
<div class="tab" style="left:136px;top:453px;width:49.5px;height:14px;background:#3a3a3a;border-top-color:#1a1a1a;border-bottom-color:#161616;border-right-width:1.5px;border-bottom-width:1.5px"></div>
<div class="t" style="left:141.55px;top:457.50px;">Correction</div>
<div class="tab" style="left:186.5px;top:453px;width:38px;height:14px;background:#3a3a3a;border-top-color:#1a1a1a;border-bottom-color:#161616;border-right-width:1.5px;border-bottom-width:1.5px"></div>
<div class="t" style="left:192.06px;top:457.50px;">Measure</div>
<div class="tab" style="left:226px;top:453px;width:87.5px;height:14px;background:#3a3a3a;border-top-color:#1a1a1a;border-bottom-color:#161616;border-right-width:1.5px;border-bottom-width:1.5px"></div>
<div class="t" style="left:231.35px;top:457.50px;">Control SCPI History</div>
<div class="tab" style="left:315px;top:453px;width:29px;height:14px;background:#3a3a3a;border-top-color:#1a1a1a;border-bottom-color:#161616;border-right-width:1.5px;border-bottom-width:1.5px"></div>
<div class="t" style="left:319.9px;top:457.50px;">About</div>
<div class="btn" style="left:3px;top:472.6px;width:51px;height:11.2px;"></div>
<div class="t" style="left:20.82px;top:475.80px;">Span</div>
<div class="btn" style="left:55.3px;top:472.6px;width:51px;height:11.2px;"></div>
<div class="t" style="left:73.12px;top:475.80px;">AMPT</div>
<div class="btn" style="left:107.6px;top:472.6px;width:51px;height:11.2px;"></div>
<div class="t" style="left:129.26px;top:475.80px;">BW</div>
<div class="btn" style="left:159.9px;top:472.6px;width:51px;height:11.2px;"></div>
<div class="t" style="left:175.8px;top:475.80px;">Sweep</div>
<div class="btn" style="left:212.2px;top:472.6px;width:51px;height:11.2px;"></div>
<div class="t" style="left:230.02px;top:475.80px;">Trig</div>
<div class="btn" style="left:264.5px;top:472.6px;width:51px;height:11.2px;"></div>
<div class="t" style="left:272.72px;top:475.80px;">TraceMath</div>
<div class="a" style="left:345px;top:466.6px;width:303px;height:1px;background:#5e5e5e"></div>
<div class="a wm" style="left:-5.0px;top:110.6px">w</div>
<div class="a wm" style="left:6.8px;top:102.9px">w</div>
<div class="a wm" style="left:18.6px;top:95.1px">w</div>
<div class="a wm" style="left:31.9px;top:88.9px">.</div>
<div class="a wm" style="left:45.2px;top:79.1px">e</div>
<div class="a wm" style="left:57.5px;top:71.3px">l</div>
<div class="a wm" style="left:69.8px;top:63.6px">e</div>
<div class="a wm" style="left:82.1px;top:55.8px">c</div>
<div class="a wm" style="left:94.4px;top:48.1px">f</div>
<div class="a wm" style="left:106.7px;top:40.3px">a</div>
<div class="a wm" style="left:119.0px;top:32.5px">n</div>
<div class="a wm" style="left:131.3px;top:24.8px">s</div>
<div class="a wm" style="left:143.6px;top:17.0px">.</div>
<div class="a wm" style="left:155.9px;top:9.3px">c</div>
<div class="a wm" style="left:168.2px;top:1.5px">o</div>
<div class="a wm" style="left:180.5px;top:-6.3px">m</div>
</body></html>
